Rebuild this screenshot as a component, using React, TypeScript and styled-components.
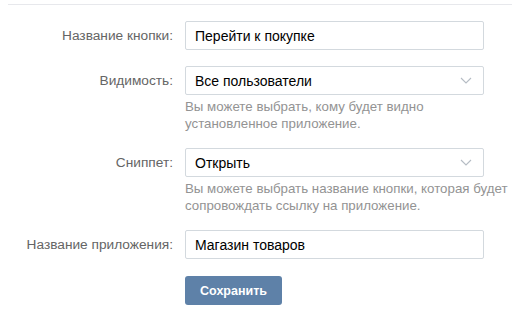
import React from 'react';
import styled, { createGlobalStyle } from 'styled-components';

const GlobalStyle = createGlobalStyle`
  html, body {
    margin: 0;
    padding: 0;
    background: #fff;
  }
  body {
    font-family: "Liberation Sans", Arial, sans-serif;
    font-size: 13px;
    -webkit-font-smoothing: antialiased;
  }
`;

const Container = styled.div`
  margin: 4px 8px 0;
  border-top: 1px solid #e7e8ec;
  padding-top: 16px;
`;

const Row = styled.div`
  display: grid;
  grid-template-columns: 177px 299px;
  margin-bottom: 16px;
`;

const Label = styled.label`
  height: 29px;
  display: flex;
  align-items: center;
  justify-content: flex-end;
  padding-right: 12px;
  color: #656565;
  font-size: 13.7px;
  white-space: nowrap;
`;

const Field = styled.div`
  display: flex;
  flex-direction: column;
`;

const Input = styled.div`
  box-sizing: border-box;
  height: 29px;
  border: 1px solid #d3d9de;
  border-radius: 2px;
  padding: 0 9px;
  display: flex;
  align-items: center;
  justify-content: space-between;
  color: #000;
  font-size: 14px;
  background: #fff;
`;

const Chevron = styled.svg`
  width: 12px;
  height: 7px;
  margin-right: 2px;
  flex-shrink: 0;
`;

const Hint = styled.div`
  margin-top: 3px;
  color: #939393;
  font-size: 13.3px;
  line-height: 17px;
  white-space: nowrap;
`;

const ButtonRow = styled.div`
  padding-left: 177px;
  padding-top: 1px;
`;

const Button = styled.button`
  width: 97px;
  height: 29px;
  border: none;
  border-radius: 3px;
  background: #5e81a8;
  color: #fff;
  font-family: inherit;
  font-size: 12.5px;
  font-weight: bold;
  padding: 0;
`;

const Arrow = () => (
  <Chevron viewBox="0 0 12 7">
    <polyline points="1,1 6,6 11,1" fill="none" stroke="#b5bcc4" strokeWidth="1.1" />
  </Chevron>
);

const App: React.FC = () => {
  return (
    <Container>
      <GlobalStyle />
      <Row>
        <Label>Название кнопки:</Label>
        <Field>
          <Input>Перейти к покупке</Input>
        </Field>
      </Row>
      <Row>
        <Label>Видимость:</Label>
        <Field>
          <Input>
            Все пользователи
            <Arrow />
          </Input>
          <Hint>
            Вы можете выбрать, кому будет видно
            <br />
            установленное приложение.
          </Hint>
        </Field>
      </Row>
      <Row>
        <Label>Сниппет:</Label>
        <Field>
          <Input>
            Открыть
            <Arrow />
          </Input>
          <Hint>
            Вы можете выбрать название кнопки, которая будет
            <br />
            сопровождать ссылку на приложение.
          </Hint>
        </Field>
      </Row>
      <Row>
        <Label>Название приложения:</Label>
        <Field>
          <Input>Магазин товаров</Input>
        </Field>
      </Row>
      <ButtonRow>
        <Button>Сохранить</Button>
      </ButtonRow>
    </Container>
  );
};

export default App;
